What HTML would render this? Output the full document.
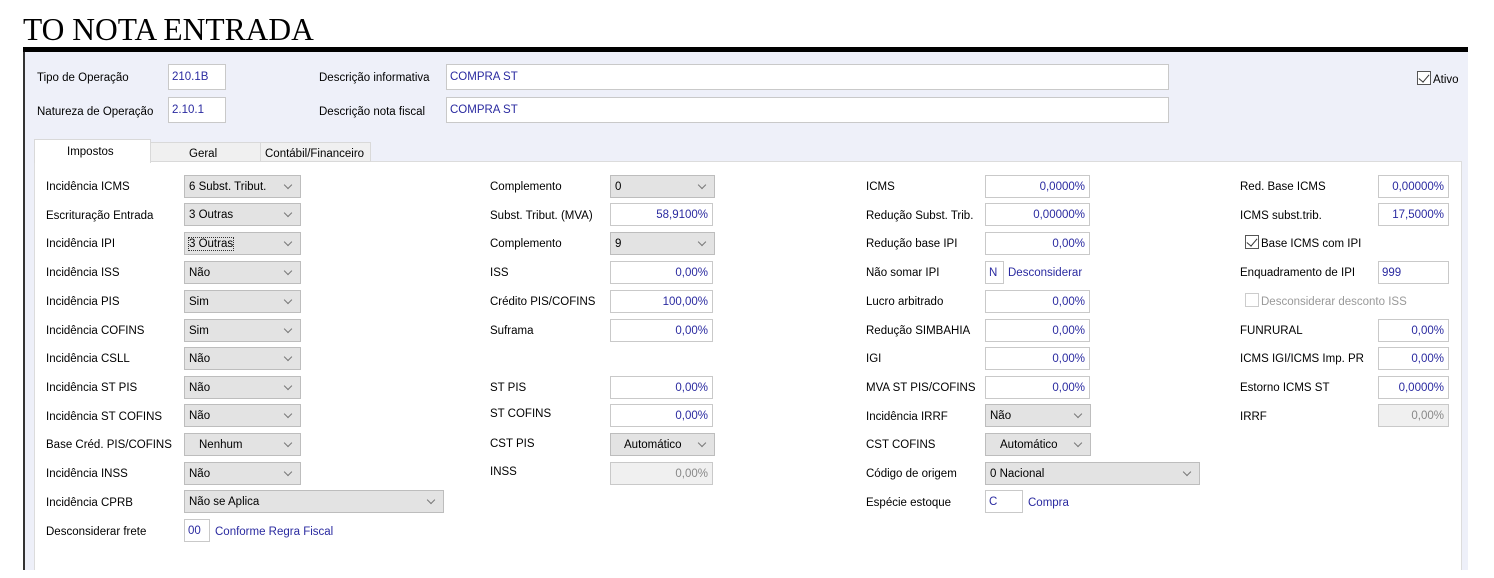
<!DOCTYPE html>
<html><head><meta charset="utf-8"><style>
body{margin:0;width:1494px;height:578px;background:#fff;position:relative;overflow:hidden;font-family:"Liberation Sans",Tahoma,sans-serif;font-size:11.5px;color:#000}
div{position:absolute;box-sizing:border-box}
.t{white-space:nowrap;line-height:16px;padding-top:1px}
.i{height:23px;border:1px solid #c9c9c9;background:#fff;color:#2a2aa0;text-align:right;padding-right:4px;line-height:22px;white-space:nowrap}
.il{text-align:left;padding-left:3px}
.d{background:#f0f0f0;color:#888}
.s{height:23px;border:1px solid #bdbdbd;background:#e3e3e3;color:#000;padding-left:4px;line-height:22px;white-space:nowrap}
.s:after{content:"";position:absolute;right:9px;top:6px;width:5px;height:5px;border-right:1px solid #777;border-bottom:1px solid #777;transform:rotate(45deg)}
.b{color:#2a2aa0}
.cb{width:14px;height:14px;border:1px solid #555;background:#fff}
.cb:after{content:"";position:absolute;left:3px;top:0px;width:5px;height:9px;border-right:1.5px solid #333;border-bottom:1.5px solid #333;transform:rotate(40deg)}
</style></head><body>
<div class="t" style="left:23px;top:11px;font-family:'Liberation Serif',serif;font-size:31.5px;line-height:38px;padding:0">TO NOTA ENTRADA</div>
<div style="left:23px;top:47px;width:1445px;height:5px;background:#000"></div>
<div style="left:23px;top:52px;width:1445px;height:518px;background:#eef0f9;border-left:2px solid #333"></div>
<div style="left:34px;top:161px;width:1428px;height:409px;background:#fff;border:1px solid #dcdcdc;border-bottom:none"></div>

<div class="t" style="left:37px;top:69px">Tipo de Operação</div>
<div class="i il" style="left:168px;top:64px;width:58px;height:26px;line-height:25px">210.1B</div>
<div class="t" style="left:37px;top:103px">Natureza de Operação</div>
<div class="i il" style="left:168px;top:97px;width:58px;height:26px;line-height:25px">2.10.1</div>
<div class="t" style="left:319px;top:69px">Descrição informativa</div>
<div class="i il" style="left:446px;top:64px;width:723px;height:26px;line-height:25px">COMPRA ST</div>
<div class="t" style="left:319px;top:103px">Descrição nota fiscal</div>
<div class="i il" style="left:446px;top:97px;width:723px;height:26px;line-height:25px">COMPRA ST</div>
<div class="cb" style="left:1417px;top:71px"></div>
<div class="t" style="left:1433px;top:71px">Ativo</div>

<div style="left:150px;top:142px;width:111px;height:20px;background:#f0f0f0;border:1px solid #d9d9d9"></div>
<div style="left:260px;top:142px;width:111px;height:20px;background:#f0f0f0;border:1px solid #d9d9d9"></div>
<div style="left:34px;top:139px;width:117px;height:24px;background:#fff;border:1px solid #d9d9d9;border-bottom:none"></div>
<div class="t" style="left:67px;top:143px">Impostos</div>
<div class="t" style="left:189px;top:145px">Geral</div>
<div class="t" style="left:265px;top:145px">Contábil/Financeiro</div>

<!-- col1 -->
<div class="t" style="left:46px;top:178px">Incidência ICMS</div><div class="s" style="left:184px;top:175px;width:117px">6 Subst. Tribut.</div>
<div class="t" style="left:46px;top:207px">Escrituração Entrada</div><div class="s" style="left:184px;top:203px;width:117px">3 Outras</div>
<div class="t" style="left:46px;top:235px">Incidência IPI</div><div class="s" style="left:184px;top:232px;width:117px"><span style="outline:1px dotted #333">3 Outras</span></div>
<div class="t" style="left:46px;top:264px">Incidência ISS</div><div class="s" style="left:184px;top:261px;width:117px">Não</div>
<div class="t" style="left:46px;top:293px">Incidência PIS</div><div class="s" style="left:184px;top:290px;width:117px">Sim</div>
<div class="t" style="left:46px;top:322px">Incidência COFINS</div><div class="s" style="left:184px;top:319px;width:117px">Sim</div>
<div class="t" style="left:46px;top:350px">Incidência CSLL</div><div class="s" style="left:184px;top:347px;width:117px">Não</div>
<div class="t" style="left:46px;top:379px">Incidência ST PIS</div><div class="s" style="left:184px;top:376px;width:117px">Não</div>
<div class="t" style="left:46px;top:408px">Incidência ST COFINS</div><div class="s" style="left:184px;top:404px;width:117px">Não</div>
<div class="t" style="left:46px;top:436px">Base Créd. PIS/COFINS</div><div class="s" style="left:184px;top:433px;width:117px;padding-left:14px">Nenhum</div>
<div class="t" style="left:46px;top:465px">Incidência INSS</div><div class="s" style="left:184px;top:462px;width:117px">Não</div>
<div class="t" style="left:46px;top:494px">Incidência CPRB</div><div class="s" style="left:184px;top:490px;width:260px">Não se Aplica</div>
<div class="t" style="left:46px;top:523px">Desconsiderar frete</div><div class="i il" style="left:184px;top:519px;width:26px">00</div><div class="t b" style="left:215px;top:523px">Conforme Regra Fiscal</div>

<!-- col2 -->
<div class="t" style="left:490px;top:178px">Complemento</div><div class="s" style="left:610px;top:175px;width:105px">0</div>
<div class="t" style="left:490px;top:207px">Subst. Tribut. (MVA)</div><div class="i" style="left:610px;top:203px;width:103px">58,9100%</div>
<div class="t" style="left:490px;top:235px">Complemento</div><div class="s" style="left:610px;top:232px;width:105px">9</div>
<div class="t" style="left:490px;top:264px">ISS</div><div class="i" style="left:610px;top:261px;width:103px">0,00%</div>
<div class="t" style="left:490px;top:293px">Crédito PIS/COFINS</div><div class="i" style="left:610px;top:290px;width:103px">100,00%</div>
<div class="t" style="left:490px;top:322px">Suframa</div><div class="i" style="left:610px;top:319px;width:103px">0,00%</div>
<div class="t" style="left:490px;top:379px">ST PIS</div><div class="i" style="left:610px;top:376px;width:103px">0,00%</div>
<div class="t" style="left:490px;top:405px">ST COFINS</div><div class="i" style="left:610px;top:404px;width:103px">0,00%</div>
<div class="t" style="left:490px;top:435px">CST PIS</div><div class="s" style="left:610px;top:433px;width:105px;padding-left:13px">Automático</div>
<div class="t" style="left:490px;top:463px">INSS</div><div class="i d" style="left:610px;top:462px;width:103px">0,00%</div>

<!-- col3 -->
<div class="t" style="left:866px;top:178px">ICMS</div><div class="i" style="left:985px;top:175px;width:105px">0,0000%</div>
<div class="t" style="left:866px;top:207px">Redução Subst. Trib.</div><div class="i" style="left:985px;top:203px;width:105px">0,00000%</div>
<div class="t" style="left:866px;top:235px">Redução base IPI</div><div class="i" style="left:985px;top:232px;width:105px">0,00%</div>
<div class="t" style="left:866px;top:264px">Não somar IPI</div><div class="i il" style="left:985px;top:261px;width:19px">N</div><div class="t b" style="left:1008px;top:264px">Desconsiderar</div>
<div class="t" style="left:866px;top:293px">Lucro arbitrado</div><div class="i" style="left:985px;top:290px;width:105px">0,00%</div>
<div class="t" style="left:866px;top:322px">Redução SIMBAHIA</div><div class="i" style="left:985px;top:319px;width:105px">0,00%</div>
<div class="t" style="left:866px;top:350px">IGI</div><div class="i" style="left:985px;top:347px;width:105px">0,00%</div>
<div class="t" style="left:866px;top:379px">MVA ST PIS/COFINS</div><div class="i" style="left:985px;top:376px;width:105px">0,00%</div>
<div class="t" style="left:866px;top:408px">Incidência IRRF</div><div class="s" style="left:985px;top:404px;width:106px">Não</div>
<div class="t" style="left:866px;top:436px">CST COFINS</div><div class="s" style="left:985px;top:433px;width:106px;padding-left:14px">Automático</div>
<div class="t" style="left:866px;top:465px">Código de origem</div><div class="s" style="left:985px;top:462px;width:215px">0 Nacional</div>
<div class="t" style="left:866px;top:494px">Espécie estoque</div><div class="i il" style="left:985px;top:490px;width:38px">C</div><div class="t b" style="left:1028px;top:494px">Compra</div>

<!-- col4 -->
<div class="t" style="left:1240px;top:178px">Red. Base ICMS</div><div class="i" style="left:1378px;top:175px;width:71px">0,00000%</div>
<div class="t" style="left:1240px;top:207px">ICMS subst.trib.</div><div class="i" style="left:1378px;top:203px;width:71px">17,5000%</div>
<div class="cb" style="left:1245px;top:235px"></div><div class="t" style="left:1261px;top:235px">Base ICMS com IPI</div>
<div class="t" style="left:1240px;top:264px">Enquadramento de IPI</div><div class="i il" style="left:1378px;top:261px;width:71px">999</div>
<div style="left:1245px;top:293px;width:14px;height:14px;border:1px solid #ccc;background:#fff"></div><div class="t" style="left:1261px;top:293px;color:#999">Desconsiderar desconto ISS</div>
<div class="t" style="left:1240px;top:322px">FUNRURAL</div><div class="i" style="left:1378px;top:319px;width:71px">0,00%</div>
<div class="t" style="left:1240px;top:350px">ICMS IGI/ICMS Imp. PR</div><div class="i" style="left:1378px;top:347px;width:71px">0,00%</div>
<div class="t" style="left:1240px;top:379px">Estorno ICMS ST</div><div class="i" style="left:1378px;top:376px;width:71px">0,0000%</div>
<div class="t" style="left:1240px;top:408px">IRRF</div><div class="i d" style="left:1378px;top:404px;width:71px">0,00%</div>
</body></html>
